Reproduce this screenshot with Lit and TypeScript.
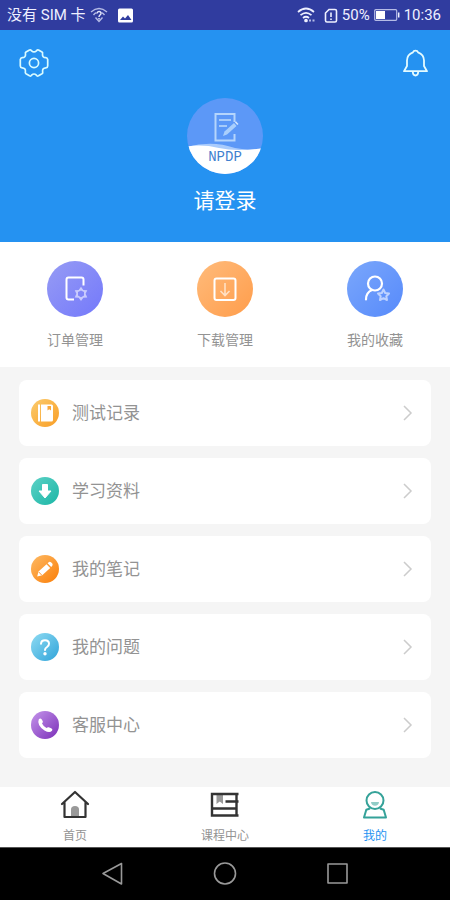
import { LitElement, html, css, svg } from "lit";
import { customElement } from "lit/decorators.js";

const disc = (id: string, from: string, to: string, r: number) => svg`
  <defs>
    <linearGradient id=${id} x1="0" y1="0" x2="1" y2="1">
      <stop offset="0.1" stop-color=${from}></stop>
      <stop offset="0.9" stop-color=${to}></stop>
    </linearGradient>
  </defs>
  <circle cx=${r} cy=${r} r=${r} fill=${`url(#${id})`}></circle>`;

const shortcuts = [
  {
    label: "订单管理",
    icon: svg`${disc("order", "#9398f5", "#777cfa", 28)}
      <path d="M27 38.500H21.500Q19.500 38.500 19.500 36.500V18.500Q19.500 16.500 21.500 16.500H34.500Q36.500 16.500 36.500 18.500V24.500" fill="none" stroke="#fff" stroke-width="2"></path>
      <path fill="#c9cbfd" fill-rule="evenodd" d="M34 25.700L36.300 28.900L40.300 29.200L38.600 32.800L40.300 36.400L36.300 36.700L34 39.900L31.700 36.700L27.700 36.400L29.400 32.800L27.700 29.200L31.700 28.900ZM34 29.400L31 31.100V34.500L34 36.200L37 34.500V31.100Z"></path>`,
  },
  {
    label: "下载管理",
    icon: svg`${disc("download", "#ffb876", "#ffa050", 28)}
      <rect x="17.500" y="17.500" width="21" height="21.500" rx="2" fill="none" stroke="#fff" stroke-width="2"></rect>
      <path d="M28 22V34M23.500 30L28 34.500L32.500 30" fill="none" stroke="#ffe0c4" stroke-width="1.600"></path>`,
  },
  {
    label: "我的收藏",
    icon: svg`${disc("favorite", "#77a4fb", "#5a8dfb", 28)}
      <g fill="none" stroke="#fff" stroke-width="2.200" stroke-linecap="round">
        <circle cx="28" cy="22.500" r="7"></circle>
        <path d="M25 29Q19 31.500 19 38.500"></path>
      </g>
      <path d="M36.500 28.500L38.200 32L42 32.500L39.300 35.200L40 39L36.500 37.200L33 39L33.700 35.200L31 32.500L34.800 32Z" fill="none" stroke="#bdd2ff" stroke-width="2" stroke-linejoin="round"></path>`,
  },
];

const entries = [
  {
    label: "测试记录",
    icon: svg`${disc("record", "#fbc766", "#f9a22c", 14)}
      <path d="M7 5.500H9V22.500H7ZM10 5.500H20.500Q22 5.500 22 7V21Q22 22.500 20.500 22.500H10Z" fill="#fff"></path>
      <path d="M16.500 7H20V11.500L18.250 10.300L16.500 11.500Z" fill="#f9a83a"></path>`,
  },
  {
    label: "学习资料",
    icon: svg`${disc("material", "#56cfc3", "#22b9a9", 14)}
      <path d="M11.500 7.500H16.500V14H20L14 21L8 14H11.500Z" fill="#fff" stroke="#fff" stroke-linejoin="round"></path>`,
  },
  {
    label: "我的笔记",
    icon: svg`${disc("note", "#fdb45c", "#fb8410", 14)}
      <path d="M6.200 21.500L7.500 16.500L15.500 9.200L19.200 13L11.200 20.300ZM16.600 8.200L18 7Q19 6.300 20 7.300L21.300 8.600Q22 9.700 21.300 10.700L20.200 12Z" fill="#fff"></path>
      <path d="M7.800 17L10.800 20.200" stroke="#fc9a36" stroke-width="1"></path>`,
  },
  {
    label: "我的问题",
    icon: svg`${disc("question", "#86d6f0", "#39a9dc", 14)}
      <path d="M10 10.800Q10.200 7.300 14 7.300Q18 7.300 18 10.800Q18 12.700 16 14Q14 15.200 14 17" fill="none" stroke="#fff" stroke-width="2" stroke-linecap="round"></path>
      <circle cx="14" cy="20.800" r="1.700" fill="#fff"></circle>`,
  },
  {
    label: "客服中心",
    icon: svg`${disc("service", "#bd8be6", "#8238bd", 14)}
      <path d="M7.800 8.200Q9.300 6.800 10.600 8.200L11.800 10.200Q12.200 11.300 11 12.400Q12.300 15.200 15.500 17Q16.700 15.800 17.800 16.300L20.600 17.400Q22 18.300 21 19.800Q18.500 22.500 13.500 19.500Q5.500 14 7.800 8.200Z" fill="#fff"></path>`,
  },
];

const tabs = [
  {
    label: "首页",
    active: false,
    icon: svg`
      <path d="M11 27V19.500Q11 16 15 16Q19 16 19 19.500V27Z" fill="#999"></path>
      <path d="M2 14L15 2L28 14M4.500 12.500V27H25.500V12.500" fill="none" stroke="#333" stroke-width="2.200" stroke-linejoin="round" stroke-linecap="round"></path>`,
  },
  {
    label: "课程中心",
    active: false,
    icon: svg`
      <path d="M6.500 4H13V14L9.750 11.500L6.500 14Z" fill="#999"></path>
      <path d="M28.500 4H2V25.500H28.500M26.500 4V26M2 18.500H27M15.500 11.500H28.500" fill="none" stroke="#333" stroke-width="2.400"></path>`,
  },
  {
    label: "我的",
    active: true,
    icon: svg`
      <path d="M11 12H19Q18.500 15.800 15 15.800Q11.500 15.800 11 12Z" fill="#92cdc7"></path>
      <g fill="none" stroke="#35a299" stroke-width="2" stroke-linejoin="round">
        <circle cx="15" cy="10.500" r="8.500"></circle>
        <path d="M10 18.500L6.300 19.800L4 27.500H26L23.700 19.800L20 18.500"></path>
      </g>`,
  },
];

@customElement("phone-status")
class PhoneStatus extends LitElement {
  static styles = css`
    :host {
      display: flex;
      align-items: center;
      justify-content: space-between;
      height: 30px;
      padding: 0 9px 0 7px;
      background: #303c9f;
      color: #eef0ff;
      font: 15px/30px Roboto, "Noto Sans CJK SC", sans-serif;
    }
    .group {
      display: flex;
      align-items: center;
      gap: 4px;
    }
    svg {
      display: block;
    }
    .photo {
      margin-left: 6px;
    }
    .sim {
      margin-left: 4px;
    }
  `;

  render() {
    return html`
      <div class="group">
        <span>没有 SIM 卡</span>
        <svg width="18" height="16" viewBox="0 0 18 16" fill="none" stroke="#b5bbe6" stroke-width="1.400">
          <path d="M1 5Q9 -2 17 5M3.500 8Q5 6 6.500 5.800M14.500 8Q13 6 11.500 5.800M5.500 10.500L9 14.500L12.500 10.500"></path>
          <path d="M7 6.500Q7.200 4.500 9 4.500Q11 4.500 11 6.300Q11 7.500 9.800 8.200Q9 8.800 9 10M9 11V12.500" stroke="#e6e8fa"></path>
        </svg>
        <svg class="photo" width="15" height="15" viewBox="0 0 15 15">
          <rect width="15" height="14" y="0.500" rx="1.500" fill="#fff"></rect>
          <path d="M2 12L5 8.500L7 10.500L10 7L13.500 12Z" fill="#303c9f"></path>
        </svg>
      </div>
      <div class="group">
        <svg width="19" height="16" viewBox="0 0 19 16" fill="none" stroke="#eef0ff" stroke-width="1.700">
          <path d="M1 5Q9 -2 17 5M3.500 8.200Q9 3.500 14.500 8.200M6 11Q9 8.500 12 11"></path>
          <circle cx="9" cy="13.500" r="1" fill="#eef0ff"></circle>
          <path d="M12 13.500H14M15.500 13.500H17.500" stroke="#b5bbe6" stroke-width="2"></path>
        </svg>
        <svg class="sim" width="14" height="15" viewBox="0 0 14 15" fill="none" stroke="#eef0ff" stroke-width="1.600">
          <path d="M5 1.500H11Q12.500 1.500 12.500 3V12.500Q12.500 14 11 14H3Q1.500 14 1.500 12.500V5Z"></path>
          <path d="M7 4.500V9M7 10.500V12"></path>
        </svg>
        <span>50%</span>
        <svg width="26" height="12" viewBox="0 0 26 12">
          <rect x="0.700" y="0.700" width="22" height="10.600" rx="1" fill="none" stroke="#b5bbe6" stroke-width="1.200"></rect>
          <rect x="2" y="2" width="9" height="8" fill="#fff"></rect>
          <path d="M24.700 3.500V8.500" stroke="#eef0ff" stroke-width="1.500"></path>
        </svg>
        <span>10:36</span>
      </div>
    `;
  }
}

@customElement("profile-header")
class ProfileHeader extends LitElement {
  static styles = css`
    :host {
      display: flex;
      flex-direction: column;
      align-items: center;
      padding: 18px 19px 28px;
      background: #2592f1;
      color: #fff;
    }
    .actions {
      display: flex;
      justify-content: space-between;
      align-self: stretch;
      margin-bottom: 20px;
    }
    button {
      border: 0;
      padding: 0;
      background: none;
      color: inherit;
      font: inherit;
      cursor: pointer;
    }
    svg {
      display: block;
    }
    .avatar {
      border-radius: 50%;
    }
    .brand {
      font: 14px "Liberation Mono", monospace;
    }
    .login {
      margin-top: 10px;
      font-size: 21px;
      line-height: 30px;
    }
  `;

  render() {
    return html`
      <div class="actions">
        <button aria-label="设置">
          <svg width="30" height="30" viewBox="0 0 30 30" fill="none" stroke="#d9fbff" stroke-width="1.700" stroke-linejoin="round">
            <path d="M10.500 2Q12 1.400 12.600 2.800Q15 5 17.400 2.800Q18 1.400 19.500 2L23 4Q24 4.700 23.500 6Q23.200 9.700 26.800 9.700Q28.300 9.800 28.700 11.500V18Q28.600 19.700 26.800 19.800Q23.200 20 23.600 23.500Q24.200 25 23 25.800L19.500 27.800Q18 28.500 17.400 27.200Q15 24.800 12.600 27.200Q12 28.500 10.500 27.800L7 25.800Q5.900 25 6.400 23.500Q6.800 20 3.200 19.800Q1.400 19.700 1.300 18V11.500Q1.700 9.800 3.200 9.700Q6.800 9.700 6.500 6Q6 4.700 7 4Z"></path>
            <circle cx="15" cy="15" r="4.600"></circle>
          </svg>
        </button>
        <button aria-label="消息">
          <svg width="30" height="30" viewBox="0 0 30 30" fill="none" stroke="#e4fbff" stroke-width="1.800" stroke-linejoin="round">
            <path d="M12 4.300Q12.500 2.700 14.500 2.700Q16.500 2.700 17 4.300Q23 6.500 23 12.500V18L26 23.200H3L6 18V12.500Q6 6.500 12 4.300Z"></path>
            <path d="M11.800 24Q12 27.500 14.500 27.500Q17 27.500 17.200 24"></path>
          </svg>
        </button>
      </div>
      <svg class="avatar" width="76" height="76" viewBox="0 0 76 76" role="img" aria-label="NPDP">
        <rect width="76" height="76" fill="#5c98f7"></rect>
        <path d="M0 49Q25 42 48 50L76 54V76H0Z" fill="#a9cbfc"></path>
        <path d="M0 48.500Q15 46 32 50Q50 54 76 50V76H0Z" fill="#fff"></path>
        <g fill="none" stroke="#bfdcfc" stroke-width="2">
          <path d="M47.500 24V16H28.500V42.500H47.500V36" opacity="0.900"></path>
          <path d="M32 22H44M32 28H40" stroke-width="1.600"></path>
        </g>
        <path d="M36 38L37.500 33.500L47 25L49.500 28L40 36.500Z" fill="#a9cffc"></path>
        <path d="M47.800 24.300L49 23.200L51.500 26L50.300 27.100Z" fill="#d3e6fe"></path>
        <text class="brand" x="38" y="63" text-anchor="middle" fill="#3f80cf">NPDP</text>
      </svg>
      <button class="login">请登录</button>
    `;
  }
}

@customElement("shortcut-row")
class ShortcutRow extends LitElement {
  static styles = css`
    :host {
      display: grid;
      grid-template-columns: repeat(3, 1fr);
      padding: 19px 0 18px;
      background: #fff;
    }
    a {
      display: flex;
      flex-direction: column;
      align-items: center;
      gap: 12px;
      color: #939393;
      font-size: 14px;
      line-height: 20px;
      text-decoration: none;
    }
    svg {
      display: block;
    }
  `;

  render() {
    return shortcuts.map(
      (s) => html`<a href="#">
        <svg width="56" height="56" viewBox="0 0 56 56">${s.icon}</svg>
        <span>${s.label}</span>
      </a>`
    );
  }
}

@customElement("entry-list")
class EntryList extends LitElement {
  static styles = css`
    :host {
      display: flex;
      flex-direction: column;
      gap: 12px;
      padding: 13px 19px 28px;
    }
    a {
      display: flex;
      align-items: center;
      gap: 13px;
      height: 66px;
      padding: 0 17px 0 12px;
      box-sizing: border-box;
      border-radius: 8px;
      background: #fff;
      color: #939393;
      font-size: 17px;
      line-height: 24px;
      text-decoration: none;
    }
    .label {
      flex: 1;
      padding-bottom: 2px;
    }
  `;

  render() {
    return entries.map(
      (e) => html`<a href="#">
        <svg width="28" height="28" viewBox="0 0 28 28">${e.icon}</svg>
        <span class="label">${e.label}</span>
        <svg width="12" height="16" viewBox="0 0 12 16" fill="none" stroke="#ccc" stroke-width="1.500">
          <path d="M2 1L9 8L2 15"></path>
        </svg>
      </a>`
    );
  }
}

@customElement("tab-bar")
class TabBar extends LitElement {
  static styles = css`
    :host {
      display: grid;
      grid-template-columns: repeat(3, 1fr);
      padding: 3px 0 4px;
      background: #fff;
    }
    a {
      display: flex;
      flex-direction: column;
      align-items: center;
      gap: 7px;
      color: #939393;
      font-size: 12px;
      line-height: 16px;
      text-decoration: none;
    }
    .active {
      color: #2592f1;
    }
  `;

  render() {
    return tabs.map(
      (t) => html`<a href="#" class=${t.active ? "active" : ""}>
        <svg width="30" height="30" viewBox="0 0 30 30">${t.icon}</svg>
        <span>${t.label}</span>
      </a>`
    );
  }
}

@customElement("system-nav")
class SystemNav extends LitElement {
  static styles = css`
    :host {
      display: grid;
      grid-template-columns: repeat(3, 1fr);
      height: 53px;
      padding: 0 12.5%;
      box-sizing: border-box;
      border-top: 1px solid #555;
      background: #000;
    }
    button {
      display: flex;
      align-items: center;
      justify-content: center;
      border: 0;
      padding: 0;
      background: none;
    }
  `;

  render() {
    const glyph = (label: string, shape: unknown) => html`<button aria-label=${label}>
      <svg width="24" height="24" viewBox="0 0 24 24" fill="none" stroke="#999" stroke-width="1.600" stroke-linejoin="round">${shape}</svg>
    </button>`;
    return html`
      ${glyph("返回", svg`<path d="M2 11.500L20.500 1.500V22Z"></path>`)}
      ${glyph("主屏幕", svg`<circle cx="12" cy="11.500" r="10.500"></circle>`)}
      ${glyph("最近任务", svg`<rect x="2" y="2" width="19" height="19"></rect>`)}
    `;
  }
}

@customElement("app-root")
class AppRoot extends LitElement {
  static styles = css`
    :host {
      display: flex;
      flex-direction: column;
      min-height: 100vh;
      background: #f5f5f5;
      font-family: "Noto Sans CJK SC", sans-serif;
    }
    .list {
      flex: 1;
    }
  `;

  render() {
    return html`
      <phone-status></phone-status>
      <profile-header></profile-header>
      <shortcut-row></shortcut-row>
      <entry-list class="list"></entry-list>
      <tab-bar></tab-bar>
      <system-nav></system-nav>
    `;
  }
}
